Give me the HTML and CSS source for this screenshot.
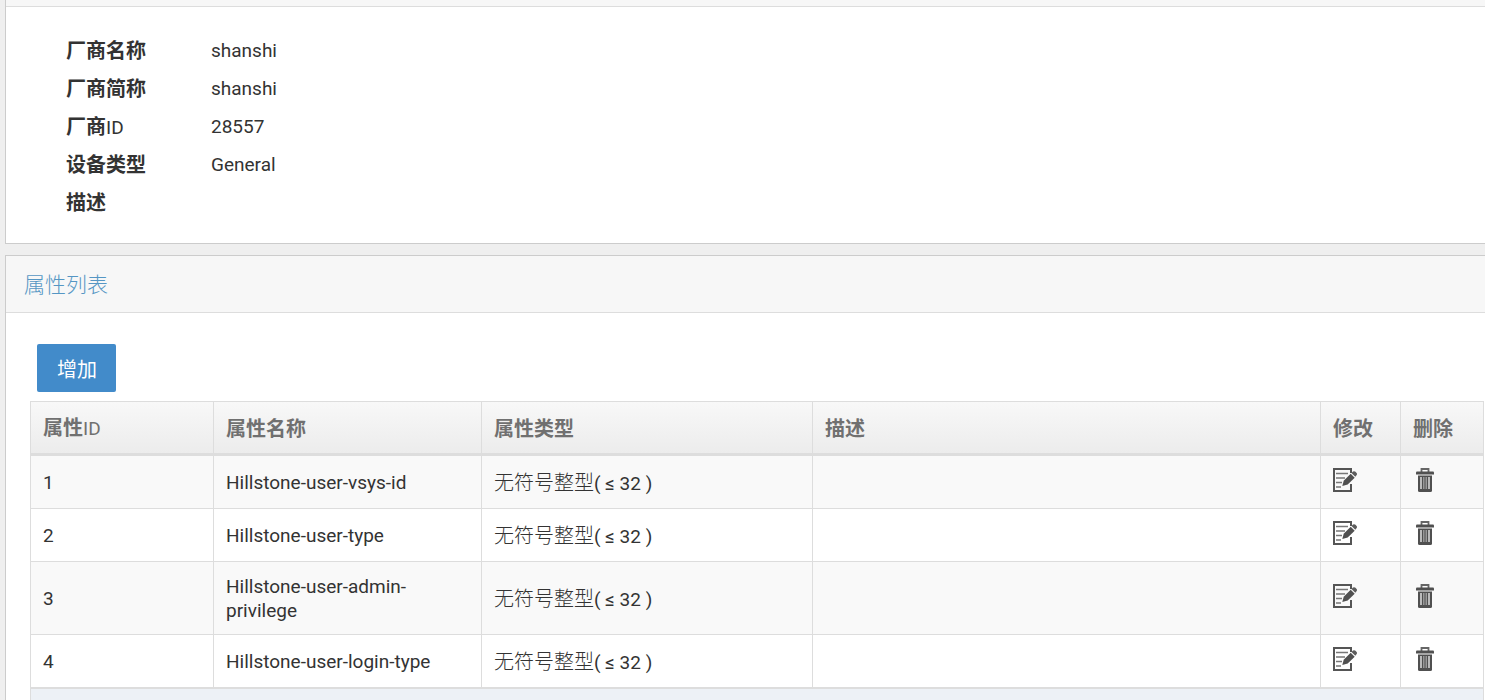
FILE: index.html
```html
<!DOCTYPE html>
<html lang="zh-CN">
<head>
    <meta charset="UTF-8">
    <meta name="viewport" content="width=device-width, initial-scale=1.0">
    <title>属性列表</title>
    <link rel="stylesheet" href="styles.css">
</head>
<body>

<!-- Shared icons -->
<svg class="icon-defs" aria-hidden="true">
    <symbol id="icon-edit" viewBox="0 0 24 24">
        <path d="M18 5V1H1v22h17v-7" fill="none" stroke="#555" stroke-width="2"/>
        <path d="M3 5.5h12M3 10h9M3 14.500h6M3 19h5" fill="none" stroke="#777" stroke-width="1.600"/>
        <path d="M9.300 18l1.400-5.200 7-7 4 4-7 6.800z" fill="#505050"/>
        <path d="M18.500 5l1.500-1.400q1.300-1 2.500.2l.9.900q1.200 1.200.1 2.500l-1.200 1.500z" fill="#5c5c5c"/>
    </symbol>
    <symbol id="icon-trash" viewBox="0 0 24 24">
        <path d="M8.500 4V1h7v3" fill="none" stroke="#666" stroke-width="1.800"/>
        <path d="M4 3.500h16q1 0 1 1v2H3v-2q0-1 1-1z" fill="#505050"/>
        <path d="M5 7.500h14v15q0 1.500-1.500 1.500h-11Q5 24 5 22.500z" fill="#505050"/>
        <path d="M8 9v12M16 9v12" stroke="#ddd" stroke-width="1.500"/>
        <path d="M10.800 9v12M13.200 9v12" stroke="#aaa" stroke-width="1.200"/>
    </symbol>
</svg>

<div class="page">
    <!-- Vendor details -->
    <section class="panel">
        <div class="panel-header panel-header-cut"></div>
        <dl class="details">
            <dt>厂商名称</dt>
            <dd>shanshi</dd>
            <dt>厂商简称</dt>
            <dd>shanshi</dd>
            <dt>厂商<span class="latin">ID</span></dt>
            <dd>28557</dd>
            <dt>设备类型</dt>
            <dd>General</dd>
            <dt>描述</dt>
            <dd></dd>
        </dl>
    </section>

    <!-- Attribute list -->
    <section class="panel panel-list">
        <h2 class="panel-header">属性列表</h2>
        <div class="panel-body">
            <button type="button" class="add-btn">增加</button>
            <table class="attr-table">
                <colgroup>
                    <col class="col-id">
                    <col class="col-name">
                    <col class="col-type">
                    <col>
                    <col class="col-edit">
                    <col class="col-delete">
                </colgroup>
                <thead>
                    <tr>
                        <th>属性<span class="latin">ID</span></th>
                        <th>属性名称</th>
                        <th>属性类型</th>
                        <th>描述</th>
                        <th>修改</th>
                        <th>删除</th>
                    </tr>
                </thead>
                <tbody>
                    <tr>
                        <td>1</td>
                        <td>Hillstone-user-vsys-id</td>
                        <td><span class="cjk">无符号整型</span>( ≤ 32 )</td>
                        <td></td>
                        <td class="icon-cell"><button type="button" class="icon-btn" aria-label="修改"><svg><use href="#icon-edit"/></svg></button></td>
                        <td class="icon-cell"><button type="button" class="icon-btn" aria-label="删除"><svg><use href="#icon-trash"/></svg></button></td>
                    </tr>
                    <tr>
                        <td>2</td>
                        <td>Hillstone-user-type</td>
                        <td><span class="cjk">无符号整型</span>( ≤ 32 )</td>
                        <td></td>
                        <td class="icon-cell"><button type="button" class="icon-btn" aria-label="修改"><svg><use href="#icon-edit"/></svg></button></td>
                        <td class="icon-cell"><button type="button" class="icon-btn" aria-label="删除"><svg><use href="#icon-trash"/></svg></button></td>
                    </tr>
                    <tr>
                        <td>3</td>
                        <td>Hillstone-user-admin-privilege</td>
                        <td><span class="cjk">无符号整型</span>( ≤ 32 )</td>
                        <td></td>
                        <td class="icon-cell"><button type="button" class="icon-btn" aria-label="修改"><svg><use href="#icon-edit"/></svg></button></td>
                        <td class="icon-cell"><button type="button" class="icon-btn" aria-label="删除"><svg><use href="#icon-trash"/></svg></button></td>
                    </tr>
                    <tr>
                        <td>4</td>
                        <td>Hillstone-user-login-type</td>
                        <td><span class="cjk">无符号整型</span>( ≤ 32 )</td>
                        <td></td>
                        <td class="icon-cell"><button type="button" class="icon-btn" aria-label="修改"><svg><use href="#icon-edit"/></svg></button></td>
                        <td class="icon-cell"><button type="button" class="icon-btn" aria-label="删除"><svg><use href="#icon-trash"/></svg></button></td>
                    </tr>
                </tbody>
                <tfoot>
                    <tr>
                        <td colspan="6"></td>
                    </tr>
                </tfoot>
            </table>
        </div>
    </section>
</div>

</body>
</html>
```
FILE: styles.css
```css
/* Global Styling */
* {
    box-sizing: border-box;
}

body {
    margin: 0;
    height: 100vh;
    overflow: hidden;
    background-color: #efefef;
    color: #333;
    font-family: Roboto, "Noto Sans CJK SC", sans-serif;
    font-size: 19px;
    line-height: 24px;
}

.icon-defs {
    display: none;
}

.page {
    display: flex;
    flex-direction: column;
    gap: 11px;
    padding-left: 5px;
}

/* Panels */
.panel {
    background-color: #fff;
    border: 1px solid #ccc;
    border-right: none;
}

.panel:first-child {
    border-top: none;
}

.panel-header {
    margin: 0;
    padding: 15px 18px 17px;
    background-color: #f7f7f7;
    border-bottom: 1px solid #ddd;
    color: #5596c4;
    font-family: "Noto Sans CJK SC Light", "Noto Sans CJK SC", sans-serif;
    font-size: 21px;
    font-weight: 300;
}

.panel-header-cut {
    height: 7px;
    padding: 0;
}

.panel-body {
    padding: 31px 1px 31px 24px;
}

/* Vendor Details */
.details {
    display: grid;
    grid-template-columns: 145px 1fr;
    margin: 0;
    padding: 25px 60px 21px;
    line-height: 38px;
}

.details dt {
    height: 38px;
    font-size: 20px;
    font-weight: bold;
}

.details dd {
    margin: 0;
}

.latin {
    font-size: 19px;
    font-weight: 400;
}

.cjk {
    font-family: "Noto Sans CJK SC Light", "Noto Sans CJK SC", sans-serif;
    font-size: 20px;
    font-weight: 300;
}

/* Add Button */
.add-btn {
    display: block;
    margin: 0 0 9px 7px;
    padding: 13px 19px 11px 20px;
    background-color: #428bca;
    border: none;
    border-radius: 2px;
    color: #fff;
    font-family: "Noto Sans CJK SC", sans-serif;
    font-size: 20px;
    line-height: 24px;
    cursor: pointer;
}

/* Attribute Table */
.attr-table {
    width: 100%;
    table-layout: fixed;
    border-collapse: separate;
    border-spacing: 0;
    border: 1px solid #ddd;
    border-width: 1px 0 0 1px;
}

.col-id {
    width: 183px;
}

.col-name {
    width: 268px;
}

.col-type {
    width: 331px;
}

.col-edit {
    width: 80px;
}

.col-delete {
    width: 83px;
}

.attr-table th,
.attr-table td {
    padding: 13px 12px 11px;
    border-right: 1px solid #ddd;
    border-bottom: 1px solid #ddd;
    text-align: left;
}

.attr-table th {
    height: 54px;
    background-image: linear-gradient(#f8f8f8, #ececec);
    border-bottom-width: 3px;
    color: #707070;
    font-size: 20px;
}

.attr-table .icon-cell {
    padding: 12px;
}

.attr-table tbody tr:nth-child(odd) {
    background-color: #f9f9f9;
}

.attr-table tbody tr:last-child td {
    border-bottom-width: 2px;
}

.attr-table tfoot td {
    height: 53px;
    background-color: #edf1f6;
}

.icon-btn {
    display: block;
    padding: 0 0 4px;
    background: none;
    border: none;
    cursor: pointer;
}

.icon-btn svg {
    display: block;
    width: 24px;
    height: 24px;
}
```
